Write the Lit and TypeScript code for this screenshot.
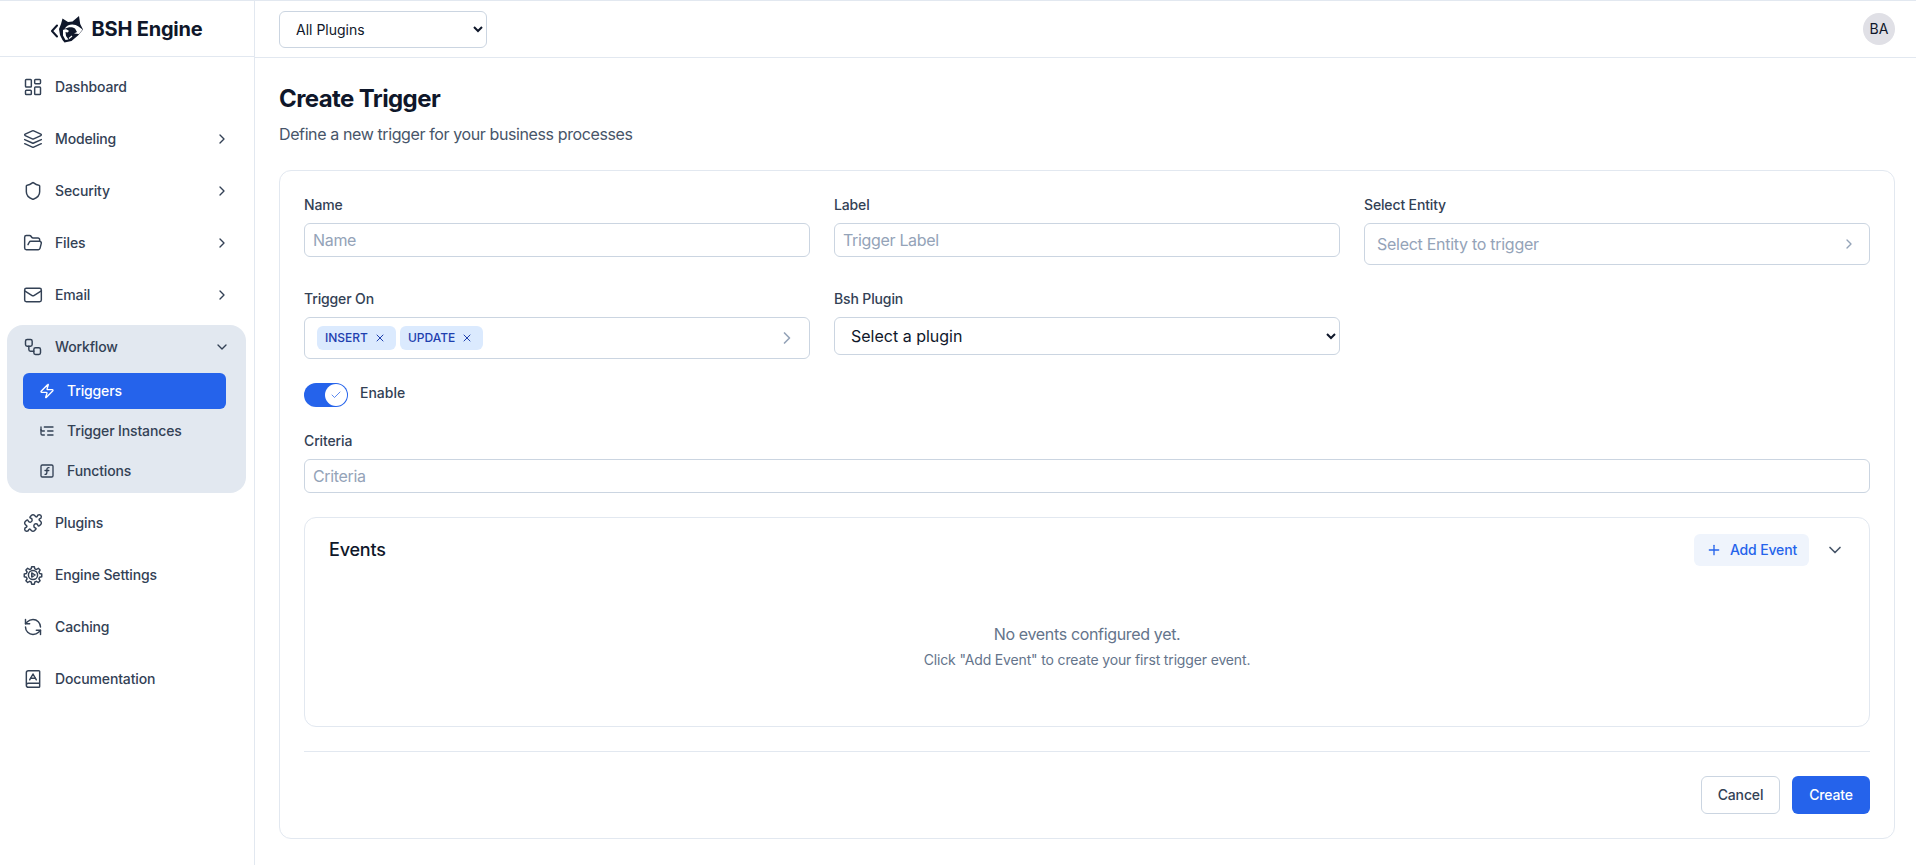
import { LitElement, html, css, svg } from "lit";
import { customElement } from "lit/decorators.js";

const ic = (body: unknown, size = 20, sw = 2) => html`<svg class="ic" width=${size} height=${size} viewBox="0 0 24 24" fill="none" stroke="currentColor" stroke-width=${sw} stroke-linecap="round" stroke-linejoin="round">${body}</svg>`;

const icons: Record<string, unknown> = {
  dash: svg`<rect x="3" y="3" width="7" height="9" rx="1"/><rect x="14" y="3" width="7" height="5" rx="1"/><rect x="14" y="12" width="7" height="9" rx="1"/><rect x="3" y="16" width="7" height="5" rx="1"/>`,
  layers: svg`<path d="M12.83 2.18a2 2 0 0 0-1.66 0L2.6 6.08a1 1 0 0 0 0 1.83l8.58 3.91a2 2 0 0 0 1.66 0l8.58-3.9a1 1 0 0 0 0-1.83Z"/><path d="m22 17.65-9.17 4.16a2 2 0 0 1-1.66 0L2 17.65"/><path d="m22 12.65-9.17 4.16a2 2 0 0 1-1.66 0L2 12.65"/>`,
  shield: svg`<path d="M20 13c0 5-3.5 7.5-7.66 8.95a1 1 0 0 1-.67-.01C7.5 20.5 4 18 4 13V6a1 1 0 0 1 1-1c2 0 4.5-1.2 6.24-2.72a1.17 1.17 0 0 1 1.52 0C14.51 3.81 17 5 19 5a1 1 0 0 1 1 1z"/>`,
  folder: svg`<path d="m6 14 1.5-2.9A2 2 0 0 1 9.24 10H20a2 2 0 0 1 1.94 2.5l-1.54 6a2 2 0 0 1-1.95 1.5H4a2 2 0 0 1-2-2V5a2 2 0 0 1 2-2h3.9a2 2 0 0 1 1.69.9l.81 1.2a2 2 0 0 0 1.67.9H18a2 2 0 0 1 2 2v2"/>`,
  mail: svg`<rect x="2" y="4" width="20" height="16" rx="2"/><path d="m22 7-8.97 5.7a1.94 1.94 0 0 1-2.06 0L2 7"/>`,
  workflow: svg`<rect x="3" y="3" width="8" height="8" rx="2"/><path d="M7 11v4a2 2 0 0 0 2 2h4"/><rect x="13" y="13" width="8" height="8" rx="2"/>`,
  zap: svg`<path d="M4 14a1 1 0 0 1-.78-1.63l9.9-10.2a.5.5 0 0 1 .86.46l-1.92 6.02A1 1 0 0 0 13 10h7a1 1 0 0 1 .78 1.63l-9.9 10.2a.5.5 0 0 1-.86-.46l1.92-6.02A1 1 0 0 0 11 14z"/>`,
  tree: svg`<path d="M21 12h-8"/><path d="M21 6H8"/><path d="M21 18h-8"/><path d="M3 6v4c0 1.1.9 2 2 2h3"/><path d="M3 10v6c0 1.1.9 2 2 2h3"/>`,
  fn: svg`<rect x="3" y="3" width="18" height="18" rx="2"/><path d="M9 17c2 0 2.8-1 2.8-2.8V10c0-2 1-3.3 3.2-3"/><path d="M9 11.2h5.7"/>`,
  puzzle: svg`<path d="M15.39 4.39a1 1 0 0 0 1.68-.474 2.5 2.5 0 1 1 3.014 3.015 1 1 0 0 0-.474 1.68l1.683 1.682a2.414 2.414 0 0 1 0 3.414L19.61 15.39a1 1 0 0 1-1.68-.474 2.5 2.5 0 1 0-3.014 3.015 1 1 0 0 1 .474 1.68l-1.683 1.682a2.414 2.414 0 0 1-3.414 0L8.61 19.61a1 1 0 0 0-1.68.474 2.5 2.5 0 1 1-3.014-3.015 1 1 0 0 0 .474-1.68l-1.683-1.682a2.414 2.414 0 0 1 0-3.414L4.39 8.61a1 1 0 0 1 1.68.474 2.5 2.5 0 1 0 3.014-3.015 1 1 0 0 1-.474-1.68l1.683-1.682a2.414 2.414 0 0 1 3.414 0z"/>`,
  gear: svg`<path d="M10.4 2.500h3.200l.6 2.600 1.900.8 2.300-1.400 2.100 2.100-1.400 2.300.8 1.900 2.600.6v3.200l-2.600.6-.8 1.900 1.400 2.300-2.100 2.100-2.300-1.400-1.900.8-.6 2.600h-3.200l-.6-2.600-1.900-.8-2.300 1.400-2.100-2.100 1.400-2.300-.8-1.900-2.600-.6v-3.200l2.600-.6.8-1.900-1.400-2.300 2.100-2.100 2.300 1.400 1.900-.8z" transform="translate(0 -.5)"/><circle cx="12" cy="12" r="5.500"/><path d="M10.500 9.500v5l4-2.500z"/>`,
  refresh: svg`<path d="M21 12a9 9 0 0 0-9-9 9.750 9.750 0 0 0-6.740 2.740L3 8"/><path d="M3 3v5h5"/><path d="M3 12a9 9 0 0 0 9 9 9.750 9.750 0 0 0 6.740-2.740L21 16"/><path d="M16 16h5v5"/>`,
  book: svg`<path d="M4 19.500v-15A2.500 2.500 0 0 1 6.500 2H19a1 1 0 0 1 1 1v18a1 1 0 0 1-1 1H6.500a1 1 0 0 1 0-5H20"/><path d="m8 13 4-7 4 7"/><path d="M9.100 11h5.700"/>`,
  right: svg`<path d="m9 18 6-6-6-6"/>`,
  down: svg`<path d="m6 9 6 6 6-6"/>`,
  x: svg`<path d="M18 6 6 18"/><path d="m6 6 12 12"/>`,
  plus: svg`<path d="M5 12h14"/><path d="M12 5v14"/>`,
  check: svg`<path d="M20 6 9 17l-5-5"/>`,
};

@customElement("app-root")
export class AppRoot extends LitElement {
  static styles = css`
    :host { display: flex; min-height: 865px; font-family: Inter, "Liberation Sans", sans-serif; color: #334155; background: #fff; border-top: 1px solid #e2e8f0; box-sizing: border-box; font-size: 14px; line-height: 20px; letter-spacing: -0.14px; }
    * { box-sizing: border-box; }
    .ic { flex: none; display: block; }
    .side { width: 255px; flex: none; border-right: 1px solid #e2e8f0; }
    .brand { height: 56px; border-bottom: 1px solid #e2e8f0; display: flex; align-items: center; justify-content: center; gap: 8px; }
    .brand span { font-size: 20px; font-weight: 700; color: #0f172a; line-height: 28px; letter-spacing: -0.2px; }
    nav { padding: 8px 8px 0 7px; display: flex; flex-direction: column; gap: 8px; }
    .item { height: 44px; display: flex; align-items: center; gap: 12px; padding: 0 16px; font-weight: 500; color: #334155; }
    .item .lb { flex: 1; }
    .group { background: #e2e8f0; border-radius: 16px; padding-bottom: 4px; }
    .subs { margin: 4px 20px 0 16px; display: flex; flex-direction: column; gap: 4px; }
    .sub { height: 36px; display: flex; align-items: center; gap: 12px; padding: 0 16px; font-weight: 500; border-radius: 6px; color: #334155; }
    .sub.on { background: #2563eb; color: #fff; }
    .main { flex: 1; min-width: 0; }
    .top { height: 57px; border-bottom: 1px solid #e2e8f0; display: flex; align-items: center; justify-content: space-between; padding: 0 21px 0 24px; }
    select { font-family: inherit; color: #0f172a; background: #fff; border: 1px solid #cbd5e1; border-radius: 6px; }
    .plug { width: 208px; height: 37px; font-size: 14px; padding-left: 12px; }
    .avatar { width: 32px; height: 32px; border-radius: 50%; background: #e0e0e6; color: #0f172a; display: flex; align-items: center; justify-content: center; font-size: 14px; letter-spacing: 0; }
    .content { padding: 25px 21px 0 24px; }
    h1 { margin: 0; font-size: 24px; line-height: 32px; font-weight: 700; color: #0f172a; letter-spacing: -0.6px; }
    .subtitle { margin: 7px 0 24px; font-size: 16px; line-height: 24px; color: #475569; letter-spacing: -0.39px; }
    .card { border: 1px solid #e2e8f0; border-radius: 12px; padding: 24px 24px 23px; height: 669px; }
    .grid { display: grid; grid-template-columns: repeat(3, 1fr); column-gap: 24px; row-gap: 24px; align-items: start; }
    label { display: block; font-weight: 500; color: #334155; margin-bottom: 8px; }
    .input { height: 34px; border: 1px solid #cbd5e1; border-radius: 6px; padding: 0 8px; font-size: 16px; color: #94a3b8; display: flex; align-items: center; letter-spacing: -0.33px; }
    .box { height: 42px; border: 1px solid #cbd5e1; border-radius: 6px; display: flex; align-items: center; justify-content: space-between; color: #94a3b8; }
    .ent { padding: 0 12px; font-size: 16px; letter-spacing: -0.28px; }
    .multi { padding: 0 12px; }
    .chips { display: flex; gap: 4px; }
    .chip { height: 24px; background: #dbeafe; color: #1e40af; border-radius: 6px; font-size: 12px; font-weight: 500; display: flex; align-items: center; gap: 6px; padding: 0 10px 0 8px; letter-spacing: 0; }
    .bsh { width: 100%; height: 38px; font-size: 16px; padding-left: 12px; }
    .toggle-row { display: flex; align-items: center; gap: 12px; margin-top: 24px; height: 24px; }
    .toggle-row .t { font-weight: 500; margin-top: -4px; letter-spacing: 0; }
    .toggle { width: 44px; height: 24px; background: #2563eb; border-radius: 12px; display: flex; justify-content: flex-end; padding: 1px; }
    .knob { width: 22px; height: 22px; border-radius: 50%; background: #fff; color: #2563eb; display: flex; align-items: center; justify-content: center; }
    .crit { margin-top: 24px; }
    .events { margin-top: 24px; height: 210px; border: 1px solid #e2e8f0; border-radius: 12px; }
    .ev-head { height: 64px; display: flex; align-items: center; padding: 0 24px; }
    .ev-head h2 { flex: 1; margin: 0; font-size: 18px; line-height: 28px; font-weight: 500; color: #0f172a; letter-spacing: -0.2px; }
    .add { width: 115px; height: 32px; border-radius: 6px; background: #eff4fc; color: #2563eb; display: flex; align-items: center; justify-content: center; gap: 8px; font-weight: 500; }
    .chev { margin-left: 16px; color: #475569; }
    .empty { padding-top: 40px; text-align: center; }
    .empty .a { font-size: 16px; line-height: 24px; color: #64748b; letter-spacing: -0.34px; }
    .empty .b { font-size: 14px; line-height: 20px; margin-top: 4px; color: #64748b; letter-spacing: -0.15px; }
    hr { border: 0; border-top: 1px solid #e2e8f0; margin: 24px 0; }
    .actions { display: flex; justify-content: flex-end; gap: 12px; }
    .btn { height: 38px; border-radius: 6px; display: flex; align-items: center; justify-content: center; font-weight: 500; }
    .cancel { width: 79px; border: 1px solid #cbd5e1; color: #334155; }
    .create { width: 78px; background: #2563eb; color: #fff; }
  `;

  private nav(icon: string, label: string, chev = true) {
    return html`<div class="item">${ic(icons[icon], 20, 1.75)}<span class="lb">${label}</span>${chev ? ic(icons.right, 16) : ""}</div>`;
  }

  private logo() {
    return html`<svg width="32" height="28" viewBox="0 0 32 28" aria-hidden="true">
      <path d="M6 10.500 1 16l5 5.500" fill="none" stroke="#0f172a" stroke-width="2" stroke-linecap="round" stroke-linejoin="round"/>
      <path fill="#0f172a" d="M11.500 3.500 17 7l4.500-.5L28 1l1.200 8L32 14.500l-5 6-6.500 5.500-7 1.500-2-2.500L9 20l-1-6 2-5z"/>
      <path fill="#fff" d="M13.500 14c3-5.500 10-5.500 14-2.500l4 3-3.500 4.500-5-.5 3-1.500-2-3.500c-3-2-7-1.500-10.500.500z"/>
      <path fill="#fff" d="M12 15c2-1.500 4-1 6 1l-1.500 1.500-2-.5.500 4 2.500 3.500-3 .5-2.500-4.500z"/>
      <path fill="none" stroke="#fff" stroke-width="1.200" d="M21 21l-3 2.500"/>
    </svg>`;
  }

  render() {
    return html`
      <aside class="side">
        <div class="brand">${this.logo()}<span>BSH Engine</span></div>
        <nav>
          ${this.nav("dash", "Dashboard", false)}
          ${this.nav("layers", "Modeling")}
          ${this.nav("shield", "Security")}
          ${this.nav("folder", "Files")}
          ${this.nav("mail", "Email")}
          <div class="group">
            <div class="item">${ic(icons.workflow, 20, 1.75)}<span class="lb">Workflow</span>${ic(icons.down, 16)}</div>
            <div class="subs">
              <div class="sub on">${ic(icons.zap, 16)}<span>Triggers</span></div>
              <div class="sub">${ic(icons.tree, 16)}<span>Trigger Instances</span></div>
              <div class="sub">${ic(icons.fn, 16)}<span>Functions</span></div>
            </div>
          </div>
          ${this.nav("puzzle", "Plugins", false)}
          ${this.nav("gear", "Engine Settings", false)}
          ${this.nav("refresh", "Caching", false)}
          ${this.nav("book", "Documentation", false)}
        </nav>
      </aside>
      <div class="main">
        <header class="top">
          <select class="plug"><option>All Plugins</option></select>
          <div class="avatar">BA</div>
        </header>
        <div class="content">
          <h1>Create Trigger</h1>
          <p class="subtitle">Define a new trigger for your business processes</p>
          <section class="card">
            <div class="grid">
              <div><label>Name</label><div class="input">Name</div></div>
              <div><label>Label</label><div class="input">Trigger Label</div></div>
              <div><label>Select Entity</label><div class="box ent"><span>Select Entity to trigger</span>${ic(icons.right, 16)}</div></div>
              <div><label>Trigger On</label>
                <div class="box multi">
                  <div class="chips">
                    <div class="chip">INSERT${ic(icons.x, 12)}</div>
                    <div class="chip">UPDATE${ic(icons.x, 12)}</div>
                  </div>
                  ${ic(icons.right, 20)}
                </div>
              </div>
              <div><label>Bsh Plugin</label><select class="bsh"><option>Select a plugin</option></select></div>
            </div>
            <div class="toggle-row">
              <div class="toggle"><div class="knob">${ic(icons.check, 12, 1.5)}</div></div>
              <span class="t">Enable</span>
            </div>
            <div class="crit"><label>Criteria</label><div class="input">Criteria</div></div>
            <div class="events">
              <div class="ev-head">
                <h2>Events</h2>
                <div class="add">${ic(icons.plus, 16)}<span>Add Event</span></div>
                <div class="chev">${ic(icons.down, 20)}</div>
              </div>
              <div class="empty">
                <div class="a">No events configured yet.</div>
                <div class="b">Click "Add Event" to create your first trigger event.</div>
              </div>
            </div>
            <hr />
            <div class="actions">
              <div class="btn cancel">Cancel</div>
              <div class="btn create">Create</div>
            </div>
          </section>
        </div>
      </div>
    `;
  }
}
